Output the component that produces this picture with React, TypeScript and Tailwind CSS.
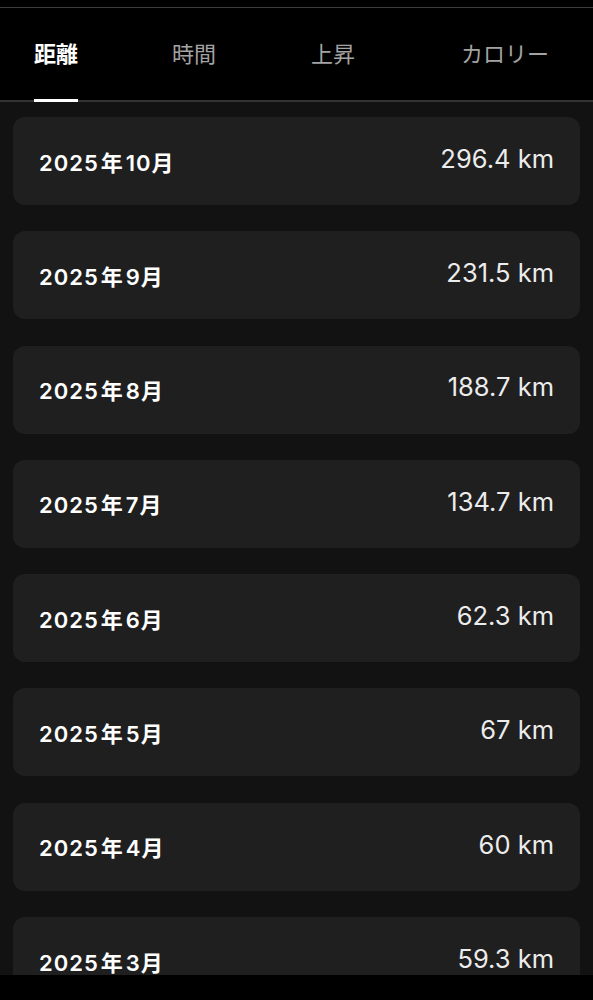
const tabs = ["距離", "時間", "上昇", "カロリー"];

const months = [
  { month: "10", value: "296.4 km" },
  { month: "9", value: "231.5 km" },
  { month: "8", value: "188.7 km" },
  { month: "7", value: "134.7 km" },
  { month: "6", value: "62.3 km" },
  { month: "5", value: "67 km" },
  { month: "4", value: "60 km" },
  { month: "3", value: "59.3 km" },
];

export default function App() {
  return (
    <div className="w-[593px] h-[1000px] bg-[#121212] flex flex-col overflow-hidden font-['Inter','Noto_Sans_CJK_JP',sans-serif] text-white">
      <div className="h-[8px] bg-black border-b border-[#3c3c3c] shrink-0" />
      <div className="h-[94px] bg-black border-b-2 border-[#333] flex items-stretch pl-[34px] shrink-0">
        {tabs.map((tab, i) => (
          <div
            key={tab}
            className={
              "flex flex-col justify-end " +
              (i === 1 ? "ml-[94px] " : "") +
              (i === 2 ? "ml-[95px] " : "") +
              (i === 3 ? "ml-[106px] " : "")
            }
          >
            <span
              className={
                "text-[22px] leading-none mb-[34px] " +
                (i === 0 ? "text-white font-bold" : "text-[#a3a3a3]")
              }
            >
              {tab}
            </span>
            <div
              className={
                "h-[3px] -mb-[2px] " + (i === 0 ? "bg-white" : "bg-transparent")
              }
            />
          </div>
        ))}
      </div>
      <div className="flex-1 overflow-hidden px-[13px] pt-[15px] flex flex-col gap-[26.3px]">
        {months.map((m) => (
          <div
            key={m.month}
            className="h-[88px] shrink-0 rounded-[12px] bg-[#1f1f1f] px-[26px] flex items-center justify-between"
          >
            <span className="text-[22px] font-semibold tracking-[1px] mt-[4px]">
              2025<span className="mx-[2px]">年</span>
              {m.month}月
            </span>
            <span className="text-[25.5px] text-[#ececec] -mt-[4px]">{m.value}</span>
          </div>
        ))}
      </div>
      <div className="h-[25px] bg-black shrink-0" />
    </div>
  );
}
